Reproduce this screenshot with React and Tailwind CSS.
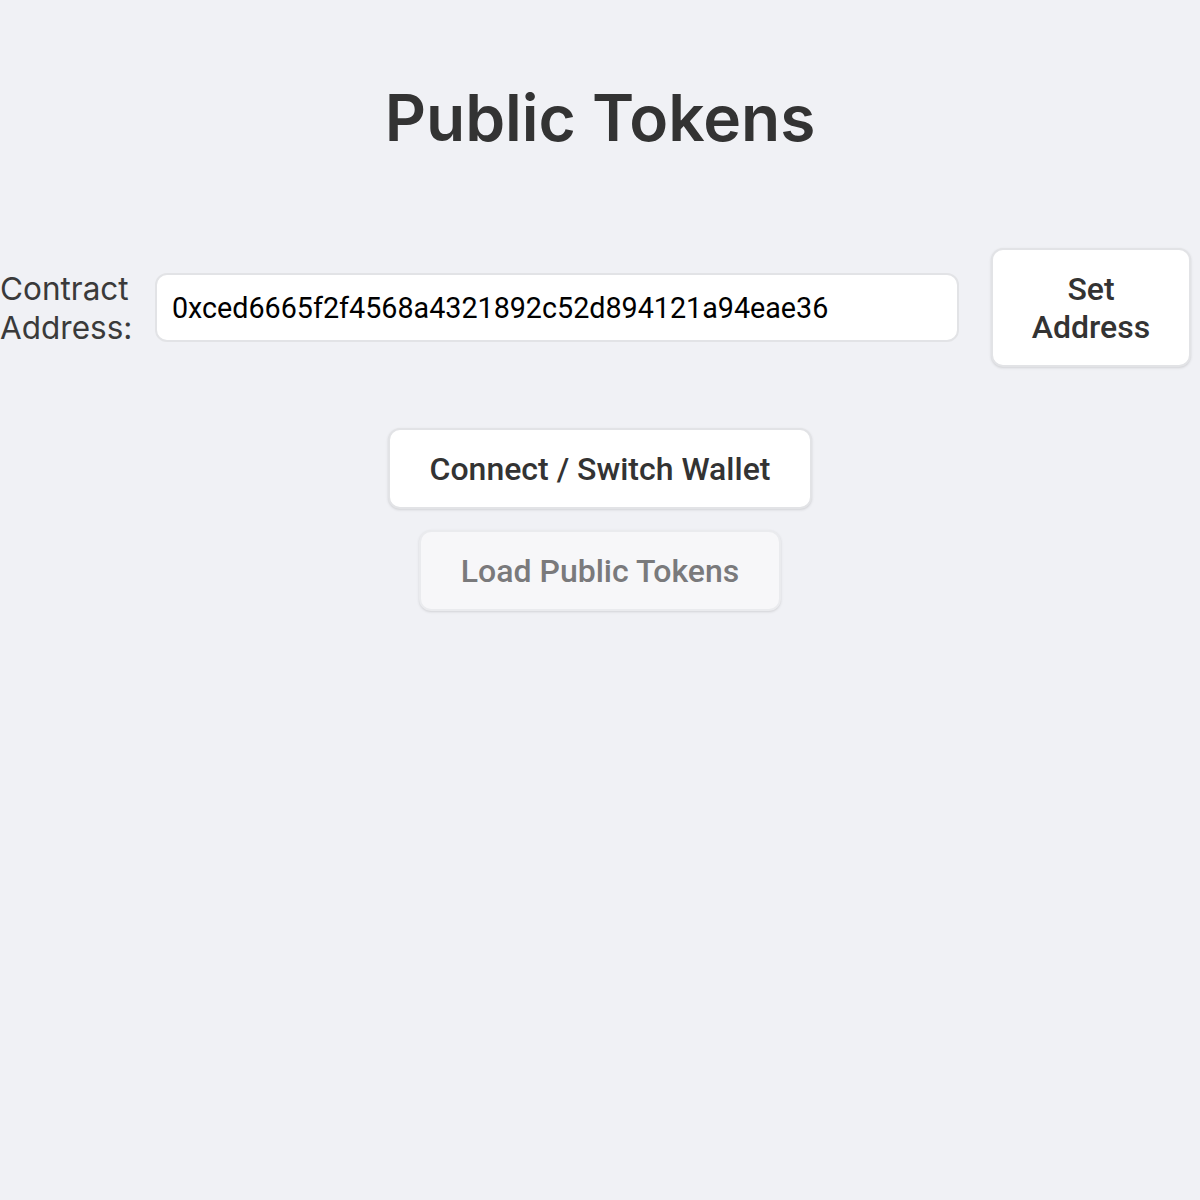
import React, { useState } from 'react';

const App = () => {
  const [address, setAddress] = useState('0xced6665f2f4568a4321892c52d894121a94eae36');

  return (
    <div className="min-h-[1200px] w-full bg-[#f0f1f5] text-[#333333]">
      {/* Title */}
      <h1 className="pt-[78px] text-center text-[64px] font-semibold leading-[80px] font-['Inter',sans-serif]">
        Public Tokens
      </h1>

      {/* Contract address row */}
      <div className="mt-[90px] flex items-center pr-[9px]">
        <label className="w-[135px] shrink-0 text-[31.5px] leading-[39px] text-[#3a3a3a] font-['Inter',sans-serif]">
          Contract Address:
        </label>
        <input
          value={address}
          onChange={(e) => setAddress(e.target.value)}
          className="ml-[20px] h-[69px] flex-1 rounded-[12px] border-2 border-[#e2e3e6] bg-white px-[15px] text-[28.7px] text-black outline-none font-['Roboto',sans-serif]"
        />
        <button className="ml-[32px] h-[119px] w-[200px] shrink-0 rounded-[12px] border-2 border-[#e2e3e6] bg-white text-[32px] font-medium leading-[38px] text-[#333333] shadow-sm font-['Roboto',sans-serif]">
          Set
          <br />
          Address
        </button>
      </div>

      {/* Wallet actions */}
      <div className="mt-[61px] flex flex-col items-center gap-[21px]">
        <button className="h-[81px] rounded-[12px] border-2 border-[#e2e3e6] bg-white px-[40px] text-[32px] font-medium text-[#333333] shadow-sm font-['Roboto',sans-serif]">
          Connect / Switch Wallet
        </button>
        <button
          disabled
          className="h-[81px] rounded-[12px] border-2 border-[#eaebee] bg-[#f7f7f9] px-[40px] text-[32px] font-medium text-[#7a7a7c] shadow-sm font-['Roboto',sans-serif]"
        >
          Load Public Tokens
        </button>
      </div>
    </div>
  );
};

export default App;
